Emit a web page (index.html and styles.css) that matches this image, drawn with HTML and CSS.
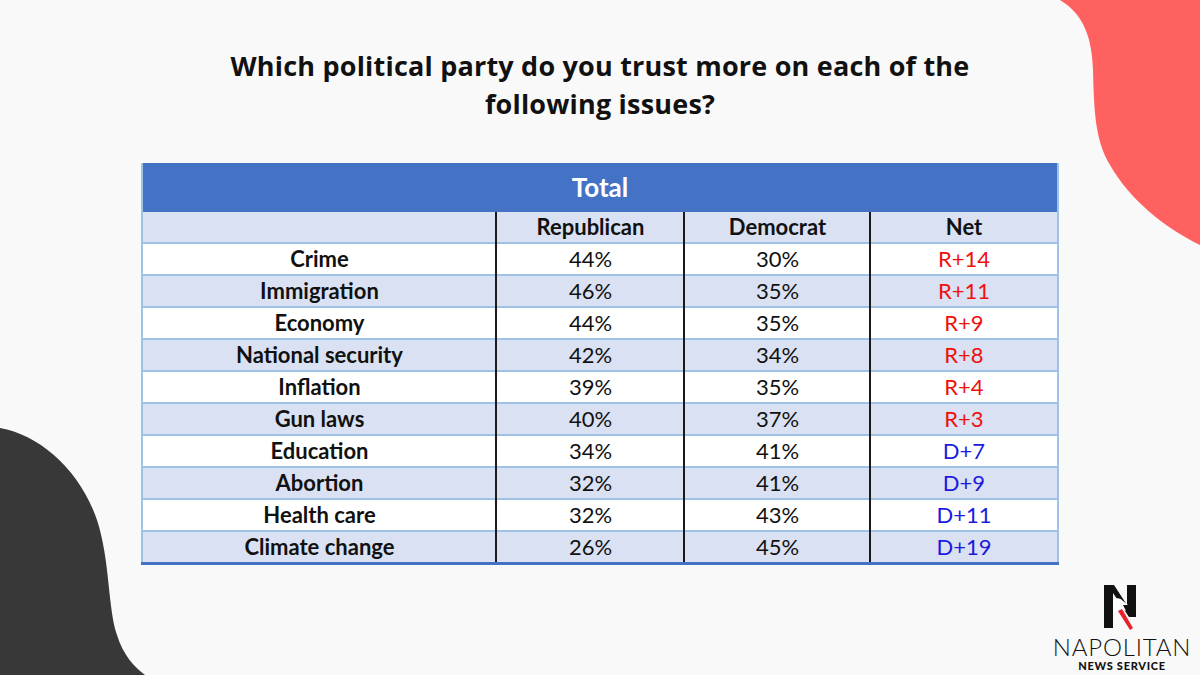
FILE: index.html
```html
<!DOCTYPE html>
<html lang="en">
<head>
<meta charset="utf-8">
<title>Trust by issue</title>
<link rel="stylesheet" href="styles.css">
</head>
<body>
<div class="page">
  <svg class="blob" width="1200" height="675" viewBox="0 0 1200 675">
    <path d="M1060 0 C1085 15 1092 40 1093 70 C1094 110 1095 140 1110 165 C1130 200 1165 228 1200 245 L1200 0 Z" fill="#ff6161"/>
    <path d="M0 428 C40 435 80 470 97 520 C110 560 108 610 117 635 C123 655 135 668 145 675 L0 675 Z" fill="#383838"/>
  </svg>

  <h1 class="title">Which political party do you trust more on each of the<br>following issues?</h1>

  <table class="grid">
    <colgroup>
      <col class="c1"><col class="c2"><col class="c3"><col class="c4">
    </colgroup>
    <thead>
      <tr class="total"><th colspan="4">Total</th></tr>
      <tr class="heads"><th></th><th>Republican</th><th>Democrat</th><th>Net</th></tr>
    </thead>
    <tbody>
      <tr><th>Crime</th><td>44%</td><td>30%</td><td class="r">R+14</td></tr>
      <tr><th>Immigration</th><td>46%</td><td>35%</td><td class="r">R+11</td></tr>
      <tr><th>Economy</th><td>44%</td><td>35%</td><td class="r">R+9</td></tr>
      <tr><th>National security</th><td>42%</td><td>34%</td><td class="r">R+8</td></tr>
      <tr><th>Inflation</th><td>39%</td><td>35%</td><td class="r">R+4</td></tr>
      <tr><th>Gun laws</th><td>40%</td><td>37%</td><td class="r">R+3</td></tr>
      <tr><th>Education</th><td>34%</td><td>41%</td><td class="d">D+7</td></tr>
      <tr><th>Abortion</th><td>32%</td><td>41%</td><td class="d">D+9</td></tr>
      <tr><th>Health care</th><td>32%</td><td>43%</td><td class="d">D+11</td></tr>
      <tr><th>Climate change</th><td>26%</td><td>45%</td><td class="d">D+19</td></tr>
    </tbody>
  </table>

  <div class="logo">
    <svg class="mark" width="36" height="48" viewBox="0 0 36 48">
      <polygon points="2,1 12,1 25,21 25,1 34,1 34,33 27,33 11,9 11,44 2,44" fill="#111"/>
      <path d="M11 16 C14 13 19 14 21 17 L26 21 L21 21 L24 27 L18 25 L11 30 Z" fill="#fff"/>
      <polygon points="16,27 20,25 31,44 28,46" fill="#e8212b"/>
    </svg>
    <div class="brand">NAPOLITAN</div>
    <div class="sub">NEWS SERVICE</div>
  </div>
</div>
</body>
</html>
```

FILE: styles.css
```css
html, body {
  margin: 0;
  padding: 0;
}
body {
  background: #f9f9f9;
}
.page {
  position: relative;
  width: 1200px;
  height: 675px;
  overflow: hidden;
  background: #f9f9f9;
  display: flex;
  flex-direction: column;
  align-items: center;
}
.blob {
  position: absolute;
  left: 0;
  top: 0;
}
.title {
  position: relative;
  margin: 47px 0 0;
  font-family: "Open Sans", "Liberation Sans", sans-serif;
  font-weight: 700;
  font-size: 27px;
  line-height: 38px;
  color: #111;
  text-align: center;
  letter-spacing: 0.2px;
}
.grid {
  position: relative;
  margin-top: 40px;
  width: 915px;
  border-collapse: collapse;
  table-layout: fixed;
  font-family: "Lato", "Liberation Sans", sans-serif;
  font-size: 22px;
  color: #111;
  border-left: 2px solid #9dc3e6;
  border-right: 2px solid #9dc3e6;
  border-bottom: 3px solid #4472c4;
}
.c1 { width: 354px; }
.c2 { width: 188px; }
.c3 { width: 186px; }
.c4 { width: 187px; }
.grid th, .grid td {
  padding: 0 0 1px;
  text-align: center;
  height: 29px;
  line-height: 26px;
  border-top: 2px solid #9dc3e6;
  white-space: nowrap;
}
.grid th {
  font-weight: 700;
}
.grid td {
  font-weight: 400;
}
.grid tr > :not(:first-child) {
  border-left: 2px solid #1a1a1a;
}
.total th {
  background: #4472c4;
  color: #fff;
  font-size: 26px;
  height: 48px;
  border-top: 0;
}
.heads th {
  background: #d9e1f2;
  height: 29px;
  border-top: 0;
}
tbody tr:nth-child(odd) { background: #fff; }
tbody tr:nth-child(even) { background: #d9e1f2; }
.r { color: #f01010; }
.d { color: #1a1ae0; }

.logo {
  position: absolute;
  right: 6px;
  bottom: 3px;
  width: 144px;
  display: flex;
  flex-direction: column;
  align-items: center;
  font-family: "Lato", "Liberation Sans", sans-serif;
  color: #111;
}
.mark {
  display: block;
  margin-left: -4px;
}
.brand {
  font-size: 24px;
  font-weight: 300;
  letter-spacing: 0.8px;
  line-height: 22px;
  margin-top: 4px;
}
.sub {
  font-size: 11px;
  font-weight: 900;
  letter-spacing: 0.7px;
  line-height: 12px;
  margin-top: 2px;
}
```
